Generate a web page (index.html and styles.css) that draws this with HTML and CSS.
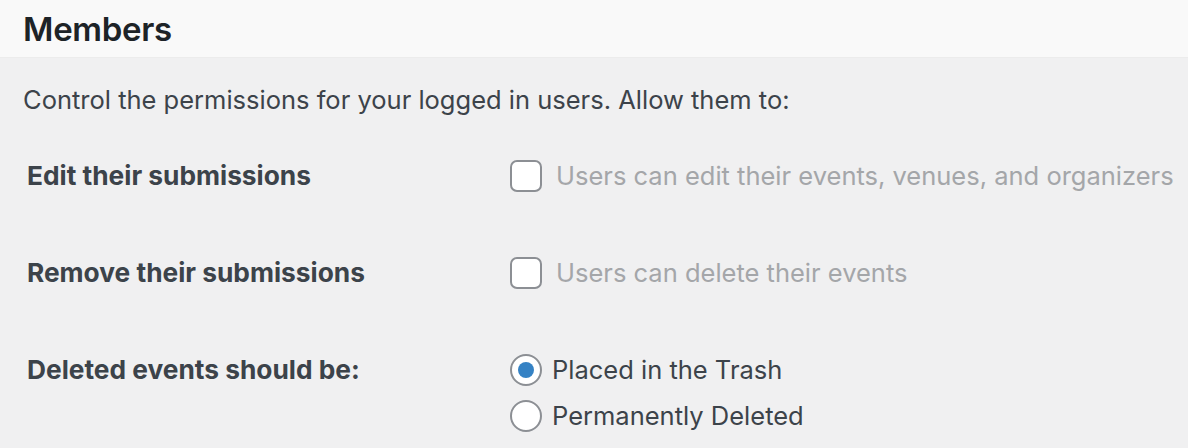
FILE: index.html
```html
<!DOCTYPE html>
<html>
<head>
<meta charset="utf-8">
<link rel="stylesheet" href="styles.css">
</head>
<body>
<div class="header"><h2 class="title">Members</h2></div>
<p class="desc">Control the permissions for your logged in users. Allow them to:</p>
<div class="form">
  <div class="row">
    <div class="label">Edit their submissions</div>
    <div class="field"><label class="opt muted"><span class="check"></span>Users can edit their events, venues, and organizers</label></div>
  </div>
  <div class="row">
    <div class="label">Remove their submissions</div>
    <div class="field"><label class="opt muted"><span class="check"></span>Users can delete their events</label></div>
  </div>
  <div class="row">
    <div class="label">Deleted events should be:</div>
    <div class="field radios">
      <label class="opt"><span class="radio on"></span>Placed in the Trash</label>
      <label class="opt"><span class="radio"></span>Permanently Deleted</label>
    </div>
  </div>
</div>
</body>
</html>
```
FILE: styles.css
```css
html, body { margin: 0; padding: 0; }
body {
  background: #f0f0f1;
  font-family: Inter, "Liberation Sans", sans-serif;
  color: #3c434a;
  width: 1188px;
  height: 448px;
  overflow: hidden;
}
.header {
  background: #f9f9f9;
  height: 57px;
  border-bottom: 1px solid #ececec;
  padding-left: 23px;
  display: flex;
  align-items: center;
}
.title {
  margin: 0;
  font-size: 33px;
  font-weight: 600;
  color: #1d2327;
  letter-spacing: -0.3px;
}
.desc {
  margin: 24px 0 0 23px;
  font-size: 25.5px;
  line-height: 36px;
}
.form {
  margin-top: 42px;
  padding-left: 27px;
  display: flex;
  flex-direction: column;
}
.row {
  display: grid;
  grid-template-columns: 483px 1fr;
  align-items: start;
  min-height: 97px;
}
.label {
  font-size: 26.3px;
  font-weight: 700;
  line-height: 32px;
  color: #3c434a;
}
.field { display: flex; flex-direction: column; gap: 14px; }
.opt {
  display: flex;
  align-items: center;
  gap: 14px;
  font-size: 25.5px;
  line-height: 32px;
  color: #3c434a;
}
.opt.muted { color: #a4a6a9; }
.check {
  width: 28px; height: 28px;
  border: 2px solid #8c8f94;
  border-radius: 7px;
  background: #fff;
  flex: none;
}
.radio {
  width: 28px; height: 28px;
  border: 2px solid #8c8f94;
  border-radius: 50%;
  background: #fff;
  flex: none;
  position: relative;
  margin-right: -4px;
}
.radio.on::after {
  content: "";
  position: absolute;
  left: 6px; top: 6px;
  width: 16px; height: 16px;
  border-radius: 50%;
  background: #3582c4;
}
.radios { gap: 14px; }
```
